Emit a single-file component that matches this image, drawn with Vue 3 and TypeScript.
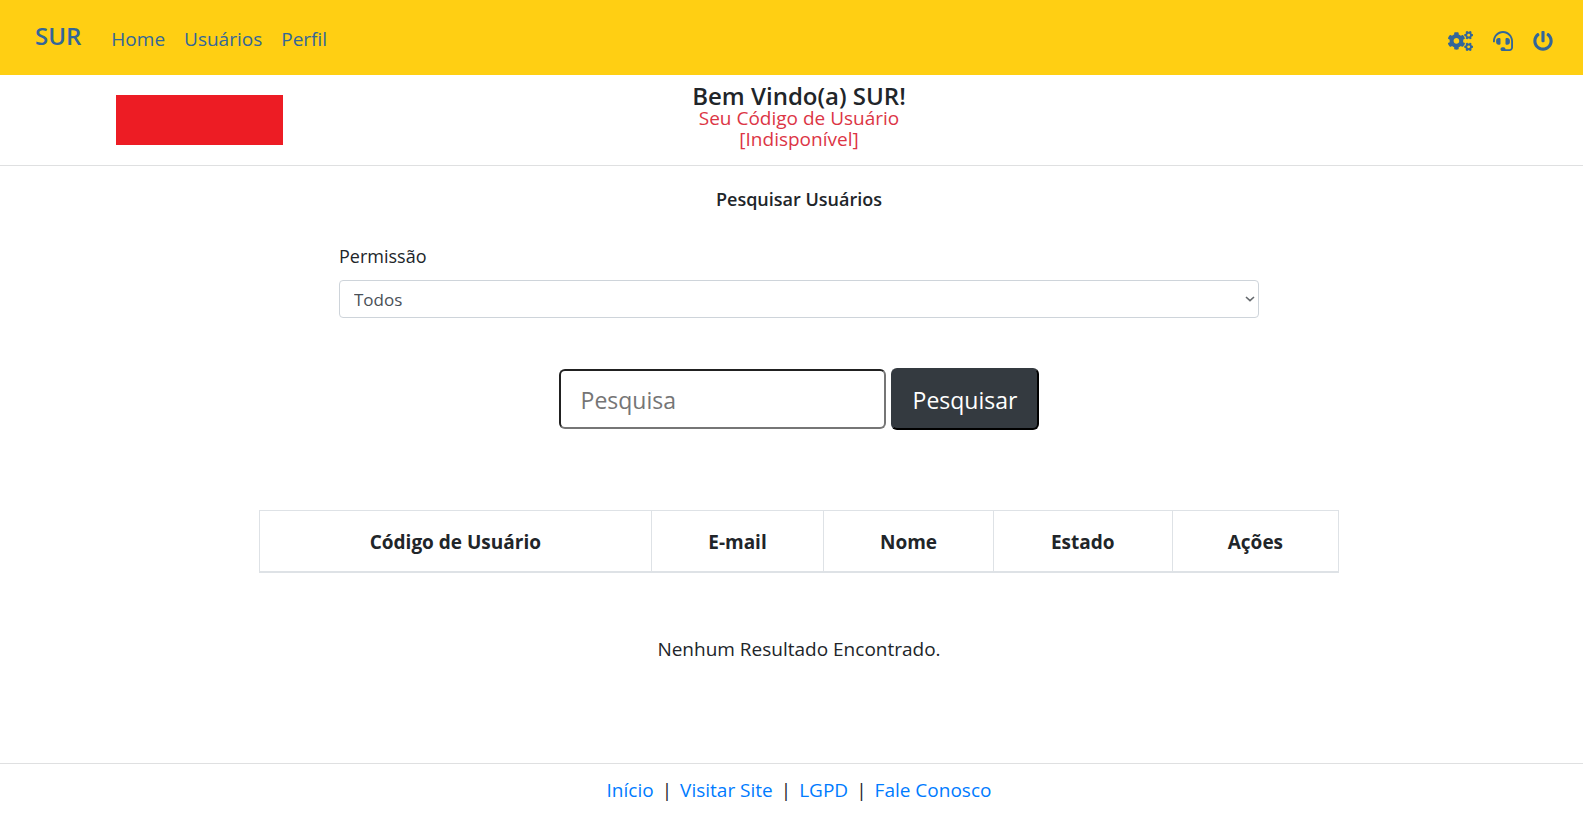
<script setup lang="ts">
import { ref } from 'vue'

interface NavLink {
  label: string
  href: string
}

const navLinks: NavLink[] = [
  { label: 'Home', href: '#home' },
  { label: 'Usuários', href: '#usuarios' },
  { label: 'Perfil', href: '#perfil' },
]

const footerLinks: NavLink[] = [
  { label: 'Início', href: '#inicio' },
  { label: 'Visitar Site', href: '#site' },
  { label: 'LGPD', href: '#lgpd' },
  { label: 'Fale Conosco', href: '#contato' },
]

const columns: string[] = ['Código de Usuário', 'E-mail', 'Nome', 'Estado', 'Ações']

const permission = ref('Todos')
const query = ref('')

const smallGear =
  'M512.1 191l-8.2 14.3c-3 5.3-9.4 7.5-15.1 5.4-11.8-4.4-22.6-10.7-32.1-18.6-4.6-3.8-5.8-10.5-2.8-15.7l8.2-14.3c-6.9-8-12.3-17.3-15.9-27.4h-16.5c-6 0-11.2-4.3-12.2-10.3-2-12-2.1-24.6 0-37.1 1-6 6.2-10.4 12.2-10.4h16.5c3.6-10.1 9-19.4 15.9-27.4l-8.2-14.3c-3-5.2-1.9-11.9 2.8-15.7 9.5-7.9 20.4-14.2 32.1-18.6 5.7-2.1 12.1.1 15.1 5.4l8.2 14.3c10.5-1.9 21.2-1.9 31.7 0L552 6.3c3-5.3 9.4-7.5 15.1-5.4 11.8 4.4 22.6 10.7 32.1 18.6 4.6 3.8 5.8 10.5 2.8 15.7l-8.2 14.3c6.9 8 12.3 17.3 15.9 27.4h16.5c6 0 11.2 4.3 12.2 10.3 2 12 2.1 24.6 0 37.1-1 6-6.2 10.4-12.2 10.4h-16.5c-3.6 10.1-9 19.4-15.9 27.4l8.2 14.3c3 5.2 1.9 11.9-2.8 15.7-9.5 7.9-20.4 14.2-32.1 18.6-5.7 2.1-12.1-.1-15.1-5.4l-8.2-14.3c-10.4 1.9-21.2 1.9-31.7 0zm-10.5-58.8c38.5 29.6 82.4-14.3 52.8-52.8-38.5-29.7-82.4 14.3-52.8 52.8z'
</script>

<template>
  <div class="page">
    <nav class="navbar">
      <a class="brand" href="#home">SUR</a>
      <ul class="nav-links">
        <li v-for="link in navLinks" :key="link.label">
          <a :href="link.href">{{ link.label }}</a>
        </li>
      </ul>
      <div class="nav-icons">
        <a href="#config" aria-label="Configurações">
          <svg viewBox="0 0 640 512" width="25" height="20" fill="currentColor">
            <path :d="smallGear" />
            <path :d="smallGear" transform="translate(0 299)" />
            <path
              d="M386.3 286.1l33.7 16.8c10.1 5.8 14.5 18.1 10.5 29.1-8.9 24.2-26.4 46.4-42.6 65.8-7.4 8.9-20.2 11.1-30.3 5.3l-29.1-16.8c-16 13.7-34.6 24.6-54.9 31.7v33.6c0 11.6-8.3 21.6-19.7 23.6-24.6 4.2-50.4 4.4-75.9 0-11.5-2-20-11.9-20-23.6V418c-20.3-7.2-38.9-18-54.9-31.7L74 403c-10 5.8-22.9 3.6-30.3-5.3-16.2-19.4-33.3-41.6-42.2-65.7-4-10.9.4-23.2 10.5-29.1l33.3-16.8c-3.9-20.9-3.9-42.4 0-63.4L12 205.8c-10.1-5.8-14.6-18.1-10.5-29 8.9-24.2 26-46.4 42.2-65.8 7.4-8.9 20.2-11.1 30.3-5.3l29.1 16.8c16-13.7 34.6-24.6 54.9-31.7V57.1c0-11.5 8.2-21.5 19.6-23.5 24.6-4.2 50.5-4.4 76-.1 11.5 2 20 11.9 20 23.6v33.6c20.3 7.2 38.9 18 54.9 31.7l29.1-16.8c10-5.8 22.9-3.6 30.3 5.3 16.2 19.4 33.2 41.6 42.1 65.8 4 10.9.1 23.2-10 29.1l-33.7 16.8c3.9 21 3.9 42.5 0 63.5zm-117.6 21.1c59.2-77-28.7-164.9-105.7-105.7-59.2 77 28.7 164.9 105.7 105.7z"
            />
          </svg>
        </a>
        <a href="#suporte" aria-label="Suporte">
          <svg viewBox="0 0 512 512" width="20" height="20" fill="currentColor">
            <path
              d="M192 208c0-17.67-14.33-32-32-32h-16c-35.35 0-64 28.65-64 64v48c0 35.35 28.65 64 64 64h16c17.67 0 32-14.33 32-32V208zm176 144c35.35 0 64-28.65 64-64v-48c0-35.35-28.65-64-64-64h-16c-17.67 0-32 14.33-32 32v112c0 17.67 14.33 32 32 32h16zM256 0C113.18 0 4.58 118.83 0 256v16c0 8.84 7.16 16 16 16h16c8.84 0 16-7.16 16-16v-16c0-114.69 93.31-208 208-208s208 93.31 208 208h-.12c.08 2.43.12 165.72.12 165.72 0 23.35-18.93 42.28-42.28 42.28H320c0-26.51-21.49-48-48-48h-32c-26.51 0-48 21.49-48 48s21.49 48 48 48h181.72c49.86 0 90.28-40.42 90.28-90.28V256C507.42 118.83 398.82 0 256 0z"
            />
          </svg>
        </a>
        <a href="#sair" aria-label="Sair">
          <svg viewBox="0 0 512 512" width="20" height="20" fill="currentColor">
            <path
              d="M400 54.1c63 45 104 118.6 104 201.9 0 136.8-110.8 247.7-247.5 248C120 504.3 8.2 393 8 256.4 7.9 173.1 48.9 99.3 111.8 54.2c11.7-8.3 28-4.8 35 7.7L162.6 90c5.9 10.5 3.1 23.8-6.6 31-41.5 30.8-68 79.6-68 134.9-.1 92.3 74.5 168.1 168 168.1 91.6 0 168.6-74.2 168-169.1-.3-51.8-24.7-101.8-68.1-134-9.7-7.2-12.4-20.5-6.5-30.9l15.8-28.1c7-12.4 23.2-16.1 34.8-7.8zM296 264V24c0-13.3-10.7-24-24-24h-32c-13.3 0-24 10.7-24 24v240c0 13.3 10.7 24 24 24h32c13.3 0 24-10.7 24-24z"
            />
          </svg>
        </a>
      </div>
    </nav>

    <div class="body">
      <header class="welcome">
        <div class="logo"></div>
        <div class="greeting">
          <h1>Bem Vindo(a) SUR!</h1>
          <p>Seu Código de Usuário<br />[Indisponível]</p>
        </div>
      </header>

      <main class="content">
        <h2>Pesquisar Usuários</h2>

        <form @submit.prevent>
          <div class="field">
            <label for="permissao">Permissão</label>
            <div class="select-wrap">
              <select id="permissao" v-model="permission">
                <option>Todos</option>
              </select>
              <svg class="chevron" viewBox="0 0 10 6" width="10" height="6">
                <path d="M1 1l4 3.6L9 1" fill="none" stroke="#65696d" stroke-width="1.6" />
              </svg>
            </div>
          </div>
          <div class="search">
            <input v-model="query" type="text" placeholder="Pesquisa" aria-label="Pesquisa" />
            <button type="submit">Pesquisar</button>
          </div>
        </form>

        <table>
          <thead>
            <tr>
              <th v-for="column in columns" :key="column" scope="col">{{ column }}</th>
            </tr>
          </thead>
        </table>

        <p class="empty">Nenhum Resultado Encontrado.</p>
      </main>

      <footer>
        <template v-for="(link, index) in footerLinks" :key="link.label">
          <span v-if="index > 0">|</span>
          <a :href="link.href">{{ link.label }}</a>
        </template>
      </footer>
    </div>
  </div>
</template>

<style>
body {
  margin: 0;
  background: #fff;
}
</style>

<style scoped>
* {
  box-sizing: border-box;
}
.page {
  overflow-x: hidden;
  font-family: 'Segoe UI', 'Open Sans', 'Noto Sans', sans-serif;
  font-size: 19px;
  line-height: 28px;
  color: #212529;
}
a {
  text-decoration: none;
}
h1,
h2,
p {
  margin: 0;
}
.navbar {
  display: flex;
  align-items: center;
  height: 75px;
  padding: 0 30px 0 35px;
  background: #ffcf13;
}
.navbar a {
  color: #336699;
}
.navbar .brand {
  margin: 0 30px 4px 0;
  font-size: 24px;
  font-weight: 600;
}
.nav-links {
  display: flex;
  gap: 19px;
  margin: 2px 0 0;
  padding: 0;
  list-style: none;
}
.nav-icons {
  display: flex;
  gap: 20px;
  margin: 7px 0 0 auto;
}
svg {
  display: block;
}
.body {
  width: calc(100% + 15px);
}
.welcome {
  display: grid;
  grid-template-columns: 1fr 2fr 1fr;
  align-items: center;
  height: 91px;
  border-bottom: 1px solid #dfe0e1;
}
.logo {
  justify-self: center;
  width: 167px;
  height: 50px;
  background: #ed1c24;
}
.greeting {
  padding-bottom: 6px;
  text-align: center;
}
h1 {
  font-size: 24px;
  font-weight: 600;
  line-height: 24px;
}
.greeting p {
  line-height: 21px;
  color: #dc3545;
}
.content {
  max-width: 1080px;
  margin: 0 auto;
  text-align: center;
}
h2 {
  padding-top: 19px;
  font-size: 18px;
  font-weight: 600;
}
form {
  padding: 29px 80px 0;
}
.field {
  text-align: left;
}
label {
  display: block;
  margin-bottom: 10px;
  font-size: 18px;
}
.select-wrap {
  position: relative;
}
select {
  display: block;
  appearance: none;
  width: 100%;
  height: 38px;
  padding: 2px 14px 0;
  border: 1px solid #ced4da;
  border-radius: 4px;
  background: #fff;
  font: inherit;
  font-size: 17px;
  color: #495057;
}
.chevron {
  position: absolute;
  top: 16px;
  right: 4px;
  pointer-events: none;
}
.search {
  display: flex;
  align-items: center;
  justify-content: center;
  gap: 5px;
  margin-top: 50px;
}
input {
  width: 327px;
  height: 60px;
  padding: 2px 20px 0;
  border: 2px inset #767676;
  border-radius: 6px;
  font: inherit;
  font-size: 23px;
}
input::placeholder {
  color: #757575;
}
button {
  height: 62px;
  padding: 2px 20px 0;
  border: 2px outset #343a40;
  border-color: #343a40 #000 #000 #343a40;
  border-radius: 6px;
  background: #343a40;
  font: inherit;
  font-size: 23px;
  color: #fff;
}
table {
  width: 100%;
  margin-top: 80px;
  border-collapse: collapse;
  table-layout: fixed;
}
th {
  height: 61px;
  padding: 2px 0 0;
  border: 1px solid #dee2e6;
  border-bottom-width: 2px;
  font-weight: 700;
}
th:nth-child(1) {
  width: 36.3%;
}
th:nth-child(2) {
  width: 16%;
}
th:nth-child(3) {
  width: 15.7%;
}
th:nth-child(4) {
  width: 16.6%;
}
.empty {
  padding: 62px 0 100px;
}
footer {
  display: flex;
  justify-content: center;
  gap: 8px;
  padding: 12px 0 20px;
  border-top: 1px solid #dfe0e1;
}
footer a {
  color: #007bff;
}
</style>
